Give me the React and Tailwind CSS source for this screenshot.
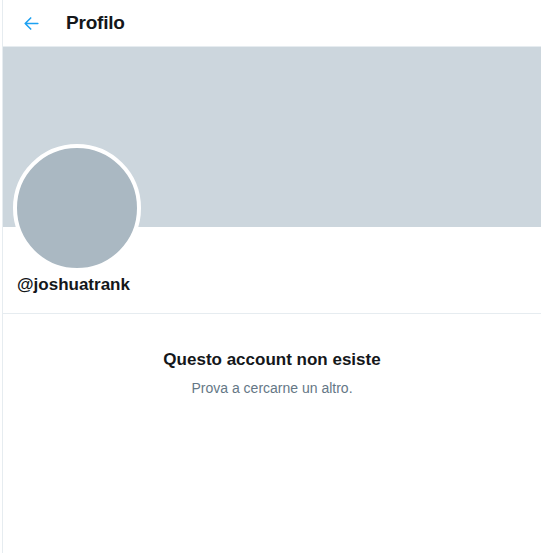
import React from 'react';

const BackArrow = () => (
  <svg viewBox="0 0 24 24" className="w-[19px] h-[19px]" fill="none" stroke="#1da1f2" strokeWidth="2" strokeLinecap="round" strokeLinejoin="round">
    <path d="M20 12H4M11 5l-7 7 7 7" />
  </svg>
);

export default function App() {
  return (
    <div
      className="w-[541px] h-[553px] bg-white flex"
      style={{ fontFamily: '"Liberation Sans", Arial, sans-serif' }}
    >
      <div className="w-[2px] bg-white" />
      <div className="flex-1 border-l border-[#e6ecf0] flex flex-col">
        <div className="h-[47px] flex items-center pl-[19px] pr-[20px] border-b border-[#e6ecf0]">
          <BackArrow />
          <span className="ml-[25px] text-[19px] font-bold text-[#14171a] tracking-[-0.2px]">Profilo</span>
        </div>
        <div className="h-[180px] bg-[#ccd6dd]" />
        <div className="pl-[10px] -mt-[83px]">
          <div className="w-[128px] h-[128px] rounded-full border-4 border-white bg-[#aab8c2]" />
        </div>
        <div className="pl-[14px] pt-[1px] h-[41px] text-[17px] font-bold text-[#14171a] leading-[24px]">
          @joshuatrank
        </div>
        <div className="border-b border-[#e6ecf0]" />
        <div className="flex flex-col items-center pt-[34px]">
          <div className="text-[17px] font-bold text-[#14171a] leading-[24px]">Questo account non esiste</div>
          <div className="mt-[6px] text-[14px] text-[#657786] leading-[20px]">Prova a cercarne un altro.</div>
        </div>
      </div>
    </div>
  );
}
